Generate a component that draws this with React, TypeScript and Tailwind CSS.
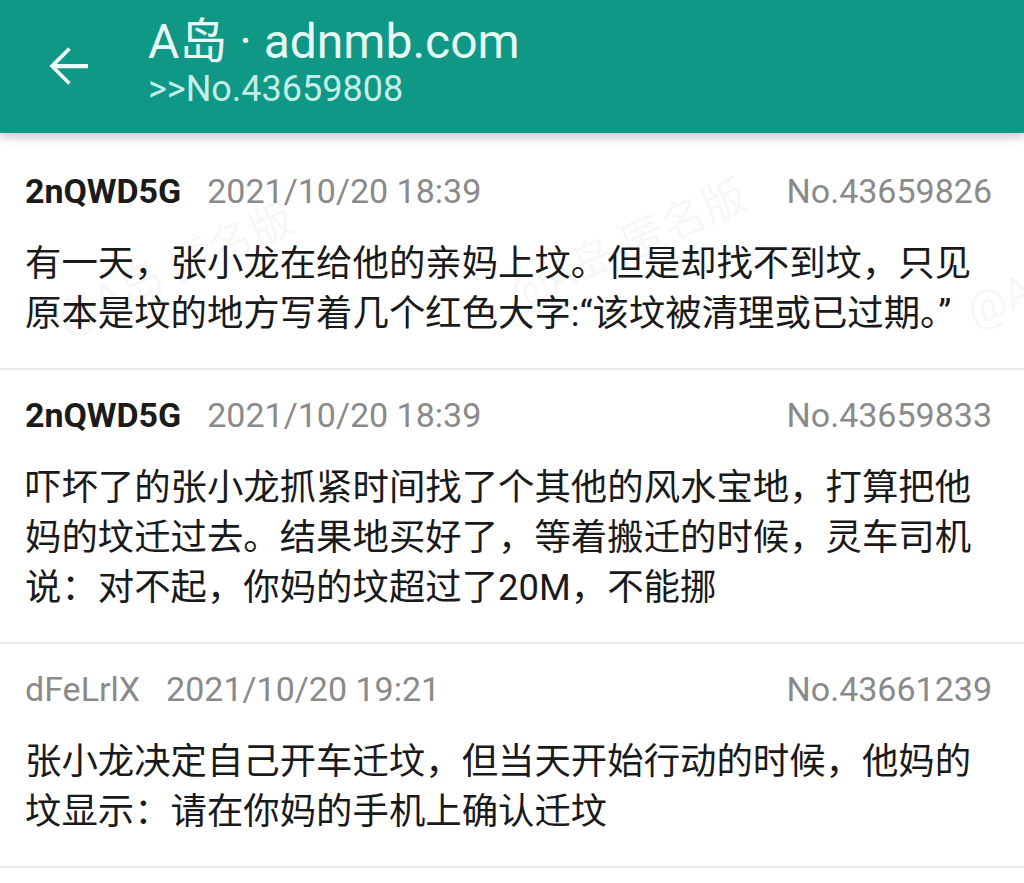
import React from "react";

type Post = {
  name: string;
  bold: boolean;
  date: string;
  no: string;
  lines: string[];
};

const posts: Post[] = [
  {
    name: "2nQWD5G",
    bold: true,
    date: "2021/10/20 18:39",
    no: "No.43659826",
    lines: [
      "有一天，张小龙在给他的亲妈上坟。但是却找不到坟，只见",
      "原本是坟的地方写着几个红色大字:“该坟被清理或已过期。”",
    ],
  },
  {
    name: "2nQWD5G",
    bold: true,
    date: "2021/10/20 18:39",
    no: "No.43659833",
    lines: [
      "吓坏了的张小龙抓紧时间找了个其他的风水宝地，打算把他",
      "妈的坟迁过去。结果地买好了，等着搬迁的时候，灵车司机",
      "说：对不起，你妈的坟超过了20M，不能挪",
    ],
  },
  {
    name: "dFeLrlX",
    bold: false,
    date: "2021/10/20 19:21",
    no: "No.43661239",
    lines: [
      "张小龙决定自己开车迁坟，但当天开始行动的时候，他妈的",
      "坟显示：请在你妈的手机上确认迁坟",
    ],
  },
];

const font = { fontFamily: 'Roboto, "Noto Sans CJK SC", sans-serif' };

function Watermark({ x, y }: { x: number; y: number }) {
  return (
    <div
      className="absolute pointer-events-none whitespace-nowrap text-[44px] leading-none text-black/[0.05] -rotate-[24deg] -translate-x-1/2 -translate-y-1/2"
      style={{ left: x, top: y }}
    >
      @A岛 匿名版
    </div>
  );
}

export default function App() {
  return (
    <div
      className="relative w-[1024px] h-[883px] overflow-hidden bg-white"
      style={font}
    >
      <header className="relative z-10 h-[133px] bg-[#109886] flex items-start shadow-[0_4px_10px_rgba(0,0,0,0.22)]">
        <div className="pl-[38px] pt-[36px] w-[148px] shrink-0">
          <svg width="60" height="60" viewBox="0 0 24 24" fill="#eefaf7">
            <path d="M20 11.15H7.5l5.6-5.6L12.05 4.5 4.55 12l7.5 7.5 1.05-1.05-5.6-5.6H20z" />
          </svg>
        </div>
        <div className="pt-[16px] flex flex-col">
          <div className="h-[52px] leading-[52px] text-[48px] text-[#e8f8f4] whitespace-nowrap">
            A岛 · adnmb.com
          </div>
          <div className="h-[42px] leading-[42px] text-[36px] text-[#c4efe7] whitespace-nowrap">
            &gt;&gt;No.43659808
          </div>
        </div>
      </header>

      <main className="pt-[13px] flex flex-col">
        {posts.map((p, i) => (
          <article
            key={i}
            className="bg-white pt-[24px] pb-[29px] pl-[25px] pr-[32px] border-b-2 border-[#e9e9e9]"
          >
            <div className="h-[42px] flex items-center text-[34px] whitespace-nowrap">
              <span
                className={
                  p.bold
                    ? "font-bold text-[#1b1b1b]"
                    : "text-[#8a8a8a]"
                }
              >
                {p.name}
              </span>
              <span className="ml-[26px] text-[#8a8a8a]">{p.date}</span>
              <span className="ml-auto text-[#8a8a8a]">{p.no}</span>
            </div>
            <div className="mt-[27px] text-[36.4px] leading-[50px] text-[#1a1a1a]">
              {p.lines.map((l, j) => (
                <div key={j} className="whitespace-nowrap">
                  {l}
                </div>
              ))}
            </div>
          </article>
        ))}
      </main>

      <Watermark x={175} y={268} />
      <Watermark x={628} y={245} />
      <Watermark x={1085} y={262} />
    </div>
  );
}
